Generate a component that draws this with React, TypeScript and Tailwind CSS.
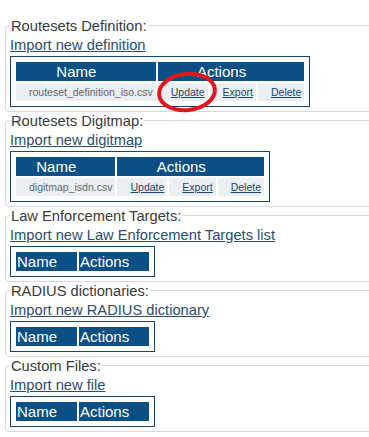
type Row = { file: string };

type Section = {
  title: string;
  link: string;
  rows: Row[];
};

const sections: Section[] = [
  { title: "Routesets Definition:", link: "Import new definition", rows: [{ file: "routeset_definition_iso.csv" }] },
  { title: "Routesets Digitmap:", link: "Import new digitmap", rows: [{ file: "digitmap_isdn.csv" }] },
  { title: "Law Enforcement Targets:", link: "Import new Law Enforcement Targets list", rows: [] },
  { title: "RADIUS dictionaries:", link: "Import new RADIUS dictionary", rows: [] },
  { title: "Custom Files:", link: "Import new file", rows: [] },
];

function FileTable({ rows }: { rows: Row[] }) {
  const span = rows.length > 0 ? 3 : 1;
  return (
    <div className="w-fit border border-[#17476a] p-[3px]">
      <table className="border-separate border-spacing-[2px]">
        <thead>
          <tr>
            <th className="bg-[#0b5085] pl-[1px] pr-5 text-center text-[15px] font-normal leading-[19px] text-white">
              Name
            </th>
            <th colSpan={span} className="bg-[#0b5085] pl-[1px] pr-5 text-center text-[15px] font-normal leading-[19px] text-white">
              Actions
            </th>
          </tr>
        </thead>
        <tbody>
          {rows.map((r) => (
            <tr key={r.file}>
              <td className="whitespace-nowrap bg-[#eceff2] pl-[13px] pr-[3px] text-[10.5px] leading-[18px] text-[#666]">
                {r.file}
              </td>
              {["Update", "Export", "Delete"].map((a) => (
                <td key={a} className="whitespace-nowrap bg-[#eceff2] pl-[13px] pr-[3px] text-[10.5px] leading-[18px]">
                  <a href="#" className="text-[#1d4670] underline">
                    {a}
                  </a>
                </td>
              ))}
            </tr>
          ))}
        </tbody>
      </table>
    </div>
  );
}

export default function App() {
  return (
    <div
      className="relative h-[437px] w-[369px] overflow-hidden bg-white pt-[18px] text-[#3a3a3a]"
      style={{ fontFamily: '"Liberation Sans", Arial, sans-serif' }}
    >
      <div className="flex flex-col gap-[1px]">
        {sections.map((s) => (
          <fieldset key={s.title} className="ml-[5px] w-[420px] rounded-[4px] border border-[#d3d9dd] pb-[4px] pl-[4px]">
            <legend className="px-[1px] pt-[3px] text-[14.7px] leading-[11px]">{s.title}</legend>
            <a href="#" className="mt-[5px] block w-fit text-[14.7px] leading-[17px] text-[#2b4d6e] underline">
              {s.link}
            </a>
            <div className="mt-[2px]">
              <FileTable rows={s.rows} />
            </div>
          </fieldset>
        ))}
      </div>

      {/* red highlight round the first Update link */}
      <svg className="pointer-events-none absolute left-[154px] top-[69px]" width="66" height="46" viewBox="0 0 66 46">
        <ellipse cx="33" cy="23" rx="28" ry="18" fill="none" stroke="#e3161d" strokeWidth="4" transform="rotate(-6 33 23)" />
      </svg>
    </div>
  );
}
